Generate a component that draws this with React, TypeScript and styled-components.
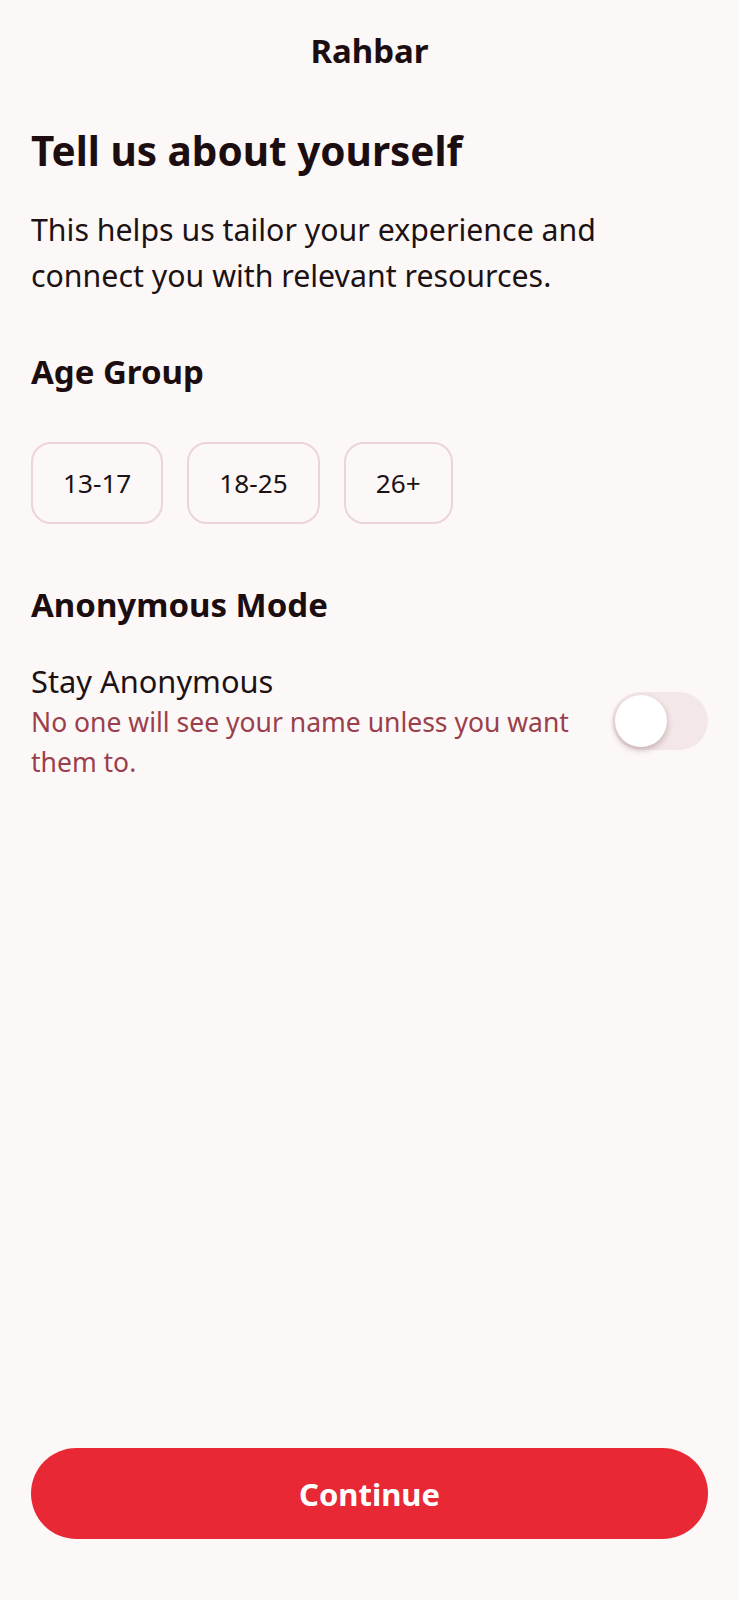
import styled, { createGlobalStyle } from "styled-components";
import { useState } from "react";

const ages = ["13-17", "18-25", "26+"];

export default function App() {
  const [age, setAge] = useState<string | null>(null);
  const [anon, setAnon] = useState(false);

  return (
    <>
      <GlobalStyle />
      <Screen>
        <Header>Rahbar</Header>
        <Content>
          <Title>Tell us about yourself</Title>
          <Intro>
            This helps us tailor your experience and connect you with relevant
            resources.
          </Intro>

          <SectionTitle>Age Group</SectionTitle>
          <ChipRow>
            {ages.map((a) => (
              <Chip key={a} $active={age === a} onClick={() => setAge(a)}>
                {a}
              </Chip>
            ))}
          </ChipRow>

          <SectionTitle $top={61}>Anonymous Mode</SectionTitle>
          <ToggleRow>
            <ToggleText>
              <ToggleLabel>Stay Anonymous</ToggleLabel>
              <ToggleHint>No one will see your name unless you want them to.</ToggleHint>
            </ToggleText>
            <Switch $on={anon} onClick={() => setAnon(!anon)}>
              <Thumb $on={anon} />
            </Switch>
          </ToggleRow>
        </Content>
        <Footer>
          <ContinueButton>Continue</ContinueButton>
        </Footer>
      </Screen>
    </>
  );
}

const GlobalStyle = createGlobalStyle`
  html, body {
    margin: 0;
    padding: 0;
    background: #fcf8f7;
  }
  body {
    font-family: "Noto Sans", "Open Sans", sans-serif;
    color: #1c1012;
  }
`;

const Screen = styled.div`
  min-height: 100vh;
  display: flex;
  flex-direction: column;
  background: #fcf8f7;
`;

const Header = styled.div`
  padding-top: 31px;
  text-align: center;
  font-size: 33px;
  line-height: 40px;
  font-weight: 700;
  color: #1c0e10;
`;

const Content = styled.div`
  flex: 1;
  display: flex;
  flex-direction: column;
  padding: 54px 31px 0;
`;

const Title = styled.h1`
  margin: 0;
  font-size: 40.5px;
  line-height: 52px;
  font-weight: 700;
  color: #1c0e10;
`;

const Intro = styled.p`
  margin: 30px 0 0;
  max-width: 640px;
  font-size: 30.3px;
  line-height: 46px;
  color: #1c1214;
`;

const SectionTitle = styled.h2<{ $top?: number }>`
  margin: ${(p) => p.$top ?? 53}px 0 0;
  font-size: 33px;
  line-height: 40px;
  font-weight: 700;
  color: #1c0e10;
`;

const ChipRow = styled.div`
  display: flex;
  gap: 24px;
  margin-top: 50px;
`;

const Chip = styled.button<{ $active: boolean }>`
  height: 82px;
  padding: 0 30px;
  border-radius: 20px;
  border: 2px solid ${(p) => (p.$active ? "#e8293a" : "#ecd5d6")};
  background: ${(p) => (p.$active ? "#fbe3e5" : "transparent")};
  font-family: inherit;
  font-size: 26.2px;
  color: #1a1213;
  cursor: pointer;
`;

const ToggleRow = styled.div`
  display: flex;
  align-items: center;
  gap: 24px;
  margin-top: 35px;
`;

const ToggleText = styled.div`
  flex: 1;
  display: flex;
  flex-direction: column;
`;

const ToggleLabel = styled.span`
  font-size: 30.8px;
  line-height: 42px;
  color: #1c1214;
`;

const ToggleHint = styled.span`
  font-size: 26.5px;
  line-height: 40px;
  color: #9a3f4b;
`;

const Switch = styled.div<{ $on: boolean }>`
  position: relative;
  width: 96px;
  height: 58px;
  flex-shrink: 0;
  border-radius: 29px;
  background: ${(p) => (p.$on ? "#e8293a" : "#f3e7e8")};
  cursor: pointer;
`;

const Thumb = styled.div<{ $on: boolean }>`
  position: absolute;
  top: 3px;
  left: ${(p) => (p.$on ? "41px" : "3px")};
  width: 52px;
  height: 52px;
  border-radius: 50%;
  background: #ffffff;
  box-shadow: 0 3px 6px rgba(80, 30, 35, 0.28);
`;

const Footer = styled.div`
  padding: 0 31px 61px;
`;

const ContinueButton = styled.button`
  width: 100%;
  height: 91px;
  border: none;
  border-radius: 46px;
  background: #e82935;
  color: #ffffff;
  font-family: inherit;
  font-size: 31px;
  font-weight: 700;
  cursor: pointer;
`;
